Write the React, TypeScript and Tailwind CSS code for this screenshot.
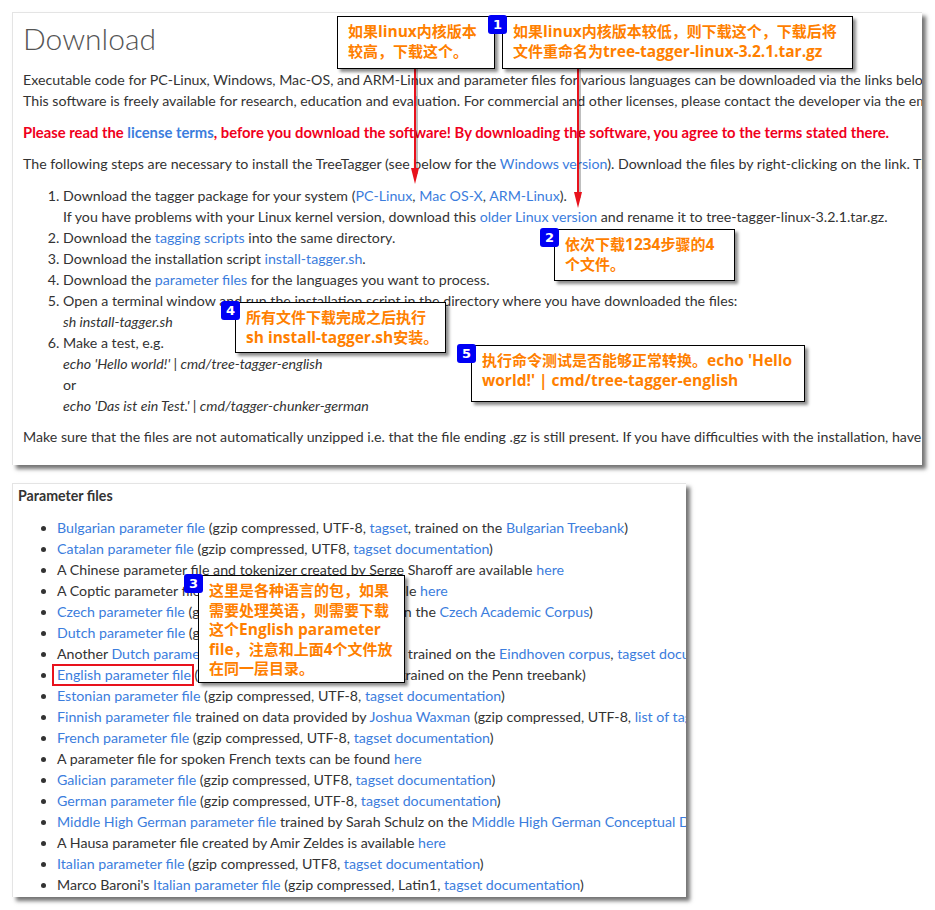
import type { ReactNode } from "react";

const A = ({ children }: { children: ReactNode }) => (
  <span className="text-[#3b7ddd]">{children}</span>
);

// latin runs inside the callouts
const L = ({ children }: { children: ReactNode }) => (
  <span className="text-[15.5px] leading-none" style={{ fontFamily: '"Open Sans", sans-serif' }}>
    {children}
  </span>
);

interface CalloutProps {
  num?: string;
  className: string;
  lines: ReactNode[];
}

const Callout = ({ num, className, lines }: CalloutProps) => (
  <div
    className={`absolute whitespace-nowrap border border-black bg-white px-[10px] pt-[5px] text-[15px] font-bold text-[#ff7f00] shadow-[3px_3px_3px_rgba(0,0,0,0.45)] ${className}`}
    style={{ fontFamily: '"Noto Sans CJK SC", sans-serif' }}
  >
    {num && (
      <span
        className="absolute left-[-15px] top-[-2px] flex h-[19px] w-[19px] items-center justify-center rounded-[3px] bg-[#0000f5] text-[13px] font-bold leading-none text-white"
        style={{ fontFamily: '"DejaVu Sans", sans-serif' }}
      >
        {num}
      </span>
    )}
    {lines.map((l, i) => (
      <div key={i} className="flex h-[19.4px] items-center">
        <span>{l}</span>
      </div>
    ))}
  </div>
);

const Arrow = ({ x, y1, y2 }: { x: number; y1: number; y2: number }) => (
  <g>
    <line x1={x + 2} y1={y1} x2={x + 2} y2={y2 - 10} stroke="rgba(0,0,0,0.25)" strokeWidth="2" />
    <line x1={x} y1={y1} x2={x} y2={y2 - 10} stroke="#e8121c" strokeWidth="2" />
    <polygon points={`${x - 4},${y2 - 16} ${x + 4},${y2 - 16} ${x},${y2}`} fill="#e8121c" />
  </g>
);

const params: ReactNode[] = [
  <><A>Bulgarian parameter file</A> (gzip compressed, UTF-8, <A>tagset</A>, trained on the <A>Bulgarian Treebank</A>)</>,
  <><A>Catalan parameter file</A> (gzip compressed, UTF8, <A>tagset documentation</A>)</>,
  <>A Chinese parameter file and tokenizer created by Serge Sharoff are available <A>here</A></>,
  <>A Coptic parameter file created by Amir Zeldes is available <A>here</A></>,
  <><A>Czech parameter file</A> (gzip compressed, Latin2, trained on the <A>Czech Academic Corpus</A>)</>,
  <><A>Dutch parameter file</A> (gzip compressed, UTF8)</>,
  <>Another <A>Dutch parameter file</A> (gzip compressed, UTF-8), trained on the <A>Eindhoven corpus</A>, <A>tagset documentation</A></>,
  <><span className="relative"><A>English parameter file</A><span className="absolute left-[-5px] right-[-3px] top-[-2px] bottom-[-3px] border-2 border-[#e8121c]" /></span> (gzip compressed, UTF-8, tagset, trained on the Penn treebank)</>,
  <><A>Estonian parameter file</A> (gzip compressed, UTF-8, <A>tagset documentation</A>)</>,
  <><A>Finnish parameter file</A> trained on data provided by <A>Joshua Waxman</A> (gzip compressed, UTF-8, <A>list of tags</A>)</>,
  <><A>French parameter file</A> (gzip compressed, UTF-8, <A>tagset documentation</A>)</>,
  <>A parameter file for spoken French texts can be found <A>here</A></>,
  <><A>Galician parameter file</A> (gzip compressed, UTF8, <A>tagset documentation</A>)</>,
  <><A>German parameter file</A> (gzip compressed, UTF-8, <A>tagset documentation</A>)</>,
  <><A>Middle High German parameter file</A> trained by Sarah Schulz on the <A>Middle High German Conceptual Database</A></>,
  <>A Hausa parameter file created by Amir Zeldes is available <A>here</A></>,
  <><A>Italian parameter file</A> (gzip compressed, UTF8, <A>tagset documentation</A>)</>,
  <>Marco Baroni's <A>Italian parameter file</A> (gzip compressed, Latin1, <A>tagset documentation</A>)</>,
];

export default function App() {
  return (
    <div
      className="relative h-[910px] w-[935px] overflow-hidden bg-white pt-[12px] text-[#333]"
      style={{ fontFamily: 'Lato, "Noto Sans CJK SC", sans-serif' }}
    >
      {/* download panel */}
      <div className="ml-[12px] h-[453px] w-[910px] overflow-hidden border-t border-l border-[#e4e4e4] bg-white pl-[10px] pt-[5px] shadow-[4px_4px_4px_rgba(0,0,0,0.55)]">
        <h1 className="text-[30px] font-light leading-[40px] text-[#555]">Download</h1>
        <div className="whitespace-nowrap text-[14.2px] leading-[21px]">
          <p className="mt-[11px]">
            Executable code for PC-Linux, Windows, Mac-OS, and ARM-Linux and parameter files for various languages can be downloaded via the links below.
            <br />
            This software is freely available for research, education and evaluation. For commercial and other licenses, please contact the developer via the email address.
          </p>
          <p className="mt-[11px] text-[14.8px] font-bold text-[#f0001c]">
            Please read the <A>license terms</A>, before you download the software! By downloading the software, you agree to the terms stated there.
          </p>
          <p className="mt-[10px]">
            The following steps are necessary to install the TreeTagger (see below for the <A>Windows version</A>). Download the files by right-clicking on the link. The files
          </p>
          <ol className="mt-[11px] list-decimal pl-[40px]">
            <li>
              Download the tagger package for your system (<A>PC-Linux</A>, <A>Mac OS-X</A>, <A>ARM-Linux</A>).
              <br />
              If you have problems with your Linux kernel version, download this <A>older Linux version</A> and rename it to tree-tagger-linux-3.2.1.tar.gz.
            </li>
            <li>Download the <A>tagging scripts</A> into the same directory.</li>
            <li>Download the installation script <A>install-tagger.sh</A>.</li>
            <li>Download the <A>parameter files</A> for the languages you want to process.</li>
            <li>
              Open a terminal window and run the installation script in the directory where you have downloaded the files:
              <br />
              <i>sh install-tagger.sh</i>
            </li>
            <li>
              Make a test, e.g.
              <br />
              <i>echo 'Hello world!' | cmd/tree-tagger-english</i>
              <br />
              or
              <br />
              <i>echo 'Das ist ein Test.' | cmd/tagger-chunker-german</i>
            </li>
          </ol>
          <p className="mt-[10px]">
            Make sure that the files are not automatically unzipped i.e. that the file ending .gz is still present. If you have difficulties with the installation, have a look
          </p>
        </div>
      </div>

      {/* parameter files panel */}
      <div className="ml-[12px] mt-[18px] h-[414px] w-[674px] overflow-hidden border-t border-l border-[#e4e4e4] bg-white pl-[5px] pt-[2px] shadow-[4px_4px_4px_rgba(0,0,0,0.55)]">
        <h2 className="text-[14.2px] font-bold leading-[20px]">Parameter files</h2>
        <ul className="mt-[11px] list-disc whitespace-nowrap pl-[39px] text-[14.2px] leading-[21px]">
          {params.map((p, i) => (
            <li key={i}>{p}</li>
          ))}
        </ul>
      </div>

      {/* annotations */}
      <svg className="pointer-events-none absolute left-0 top-0" width="935" height="910">
        <Arrow x={415} y1={68} y2={184} />
        <Arrow x={578} y1={68} y2={208} />
      </svg>

      <Callout
        className="left-[337px] top-[16px] h-[53px] w-[158px]"
        lines={[<>如果<L>linux</L>内核版本</>, "较高，下载这个。"]}
      />
      <Callout
        num="1"
        className="left-[502px] top-[16px] h-[53px] w-[351px]"
        lines={[
          <>如果<L>linux</L>内核版本较低，则下载这个，下载后将</>,
          <>文件重命名为<L>tree-tagger-linux-3.2.1.tar.gz</L></>,
        ]}
      />
      <Callout
        num="2"
        className="left-[554px] top-[229px] h-[52px] w-[181px]"
        lines={[<>依次下载<L>1234</L>步骤的<L>4</L></>, "个文件。"]}
      />
      <Callout
        num="4"
        className="left-[235px] top-[302px] h-[51px] w-[211px]"
        lines={["所有文件下载完成之后执行", <><L>sh install-tagger.sh</L>安装。</>]}
      />
      <Callout
        num="5"
        className="left-[471px] top-[345px] h-[57px] w-[334px]"
        lines={[
          <>执行命令测试是否能够正常转换。<L>echo 'Hello</L></>,
          <L>world!' | cmd/tree-tagger-english</L>,
        ]}
      />
      <Callout
        num="3"
        className="left-[198px] top-[575px] h-[108px] w-[207px]"
        lines={[
          "这里是各种语言的包，如果",
          "需要处理英语，则需要下载",
          <>这个<L>English parameter</L></>,
          <><L>file</L>，注意和上面<L>4</L>个文件放</>,
          "在同一层目录。",
        ]}
      />
    </div>
  );
}
